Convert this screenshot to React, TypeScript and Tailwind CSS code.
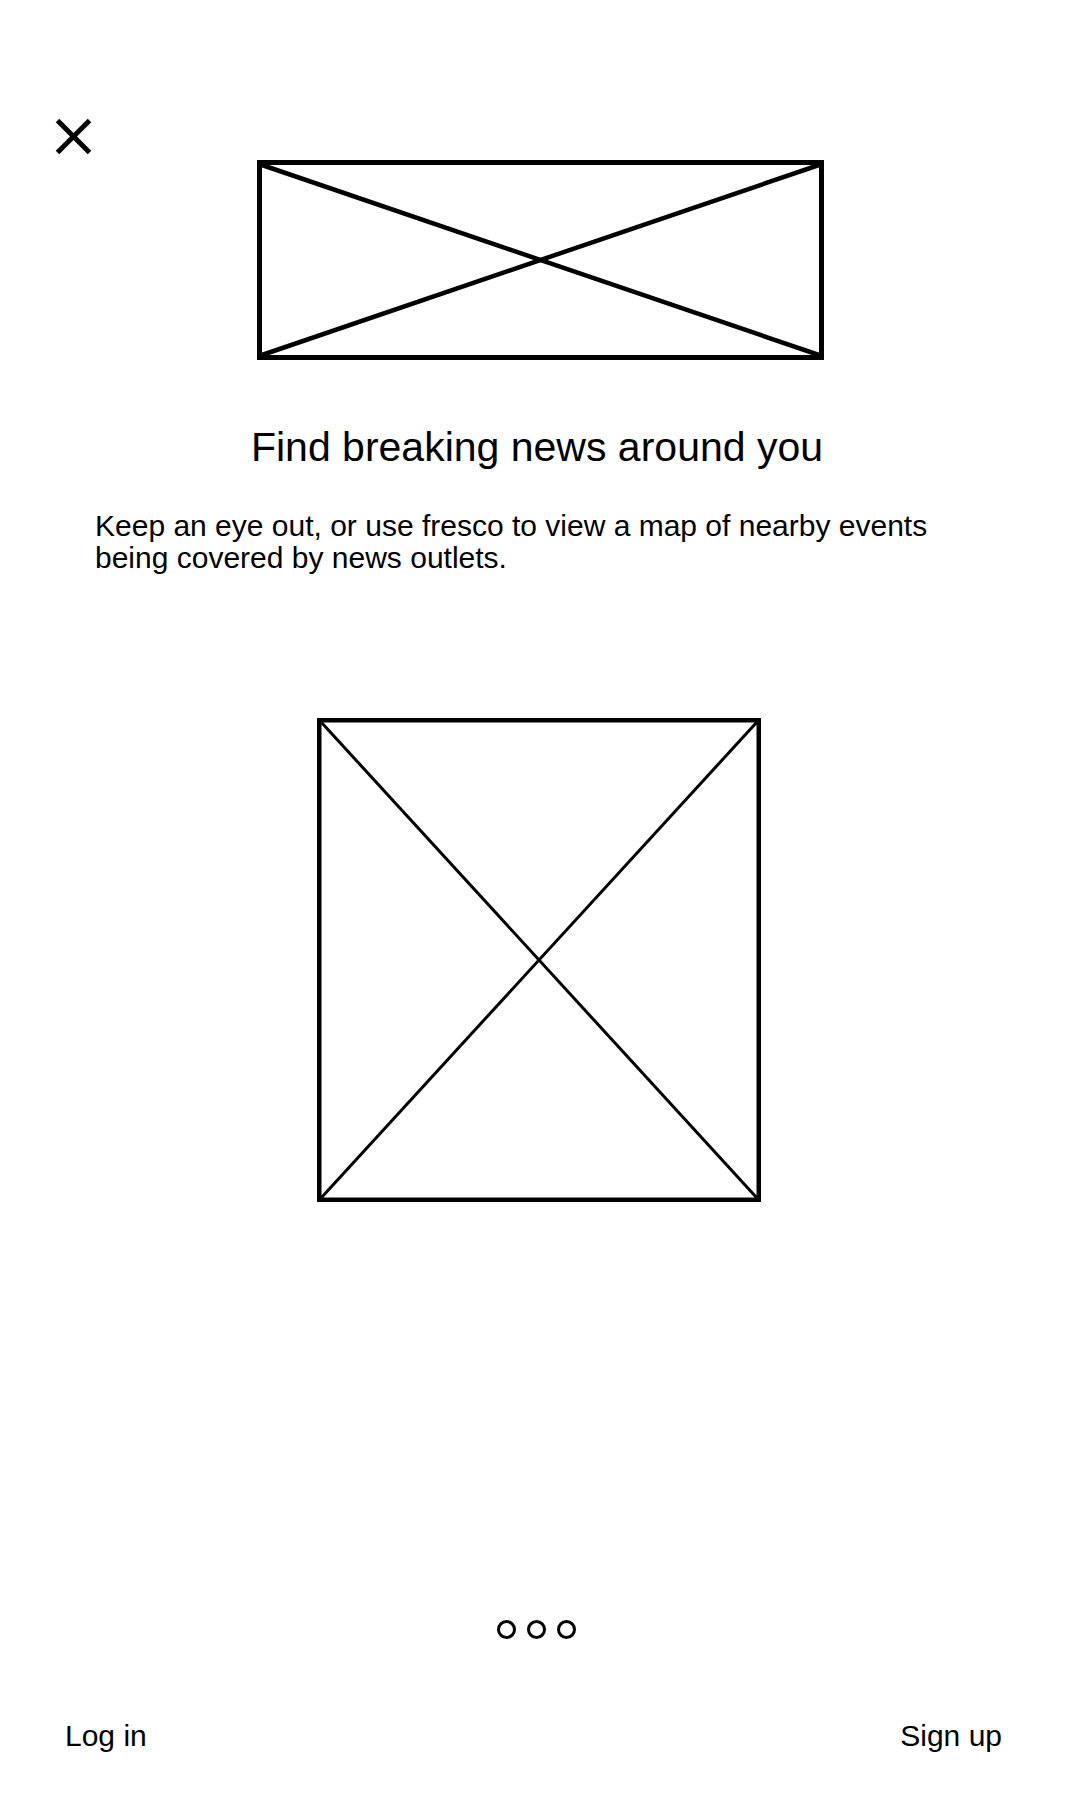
import React from 'react';

const Placeholder: React.FC<{ w: number; h: number; border: number; diag: number; className?: string }> = ({ w, h, border, diag, className }) => (
  <svg width={w} height={h} viewBox={`0 0 ${w} ${h}`} className={className}>
    <line x1={border} y1={border} x2={w - border} y2={h - border} stroke="#000" strokeWidth={diag} />
    <line x1={w - border} y1={border} x2={border} y2={h - border} stroke="#000" strokeWidth={diag} />
    <rect x={border / 2} y={border / 2} width={w - border} height={h - border} fill="none" stroke="#000" strokeWidth={border} />
  </svg>
);

const Dot: React.FC = () => <div className="w-[19px] h-[19px] rounded-full border-[3px] border-black" />;

export default function App() {
  return (
    <div className="min-h-[1800px] w-[1080px] bg-white text-black font-['Liberation_Sans',Arial,sans-serif] flex flex-col">
      {/* close */}
      <div className="pt-[118px] pl-[55px]">
        <button className="block w-[37px] h-[37px]">
          <svg width="37" height="37" viewBox="0 0 37 37">
            <line x1="2.5" y1="2.5" x2="34.5" y2="34.5" stroke="#000" strokeWidth="5" />
            <line x1="34.5" y1="2.5" x2="2.5" y2="34.5" stroke="#000" strokeWidth="5" />
          </svg>
        </button>
      </div>

      <div className="mt-[5px] pl-[257px]">
        <Placeholder w={567} h={200} border={5} diag={4.5} className="block" />
      </div>

      <h1 className="mt-[67px] text-center text-[41px] leading-[40px] font-normal pr-[6px]">
        Find breaking news around you
      </h1>

      <p className="mt-[43px] pl-[95px] w-[1000px] text-[30px] leading-[32px]">
        Keep an eye out, or use fresco to view a map of nearby events being covered by news outlets.
      </p>

      <div className="mt-[144px] pl-[317px]">
        <Placeholder w={444} h={484} border={4.5} diag={3} className="block" />
      </div>

      <div className="mt-[418px] flex justify-center gap-[11px] pr-[7px]">
        <Dot />
        <Dot />
        <Dot />
      </div>

      <div className="mt-[79px] flex justify-between pl-[65px] pr-[78px] text-[30px] leading-[36px]">
        <button>Log in</button>
        <button className="-mt-[1px]">Sign up</button>
      </div>
    </div>
  );
}
